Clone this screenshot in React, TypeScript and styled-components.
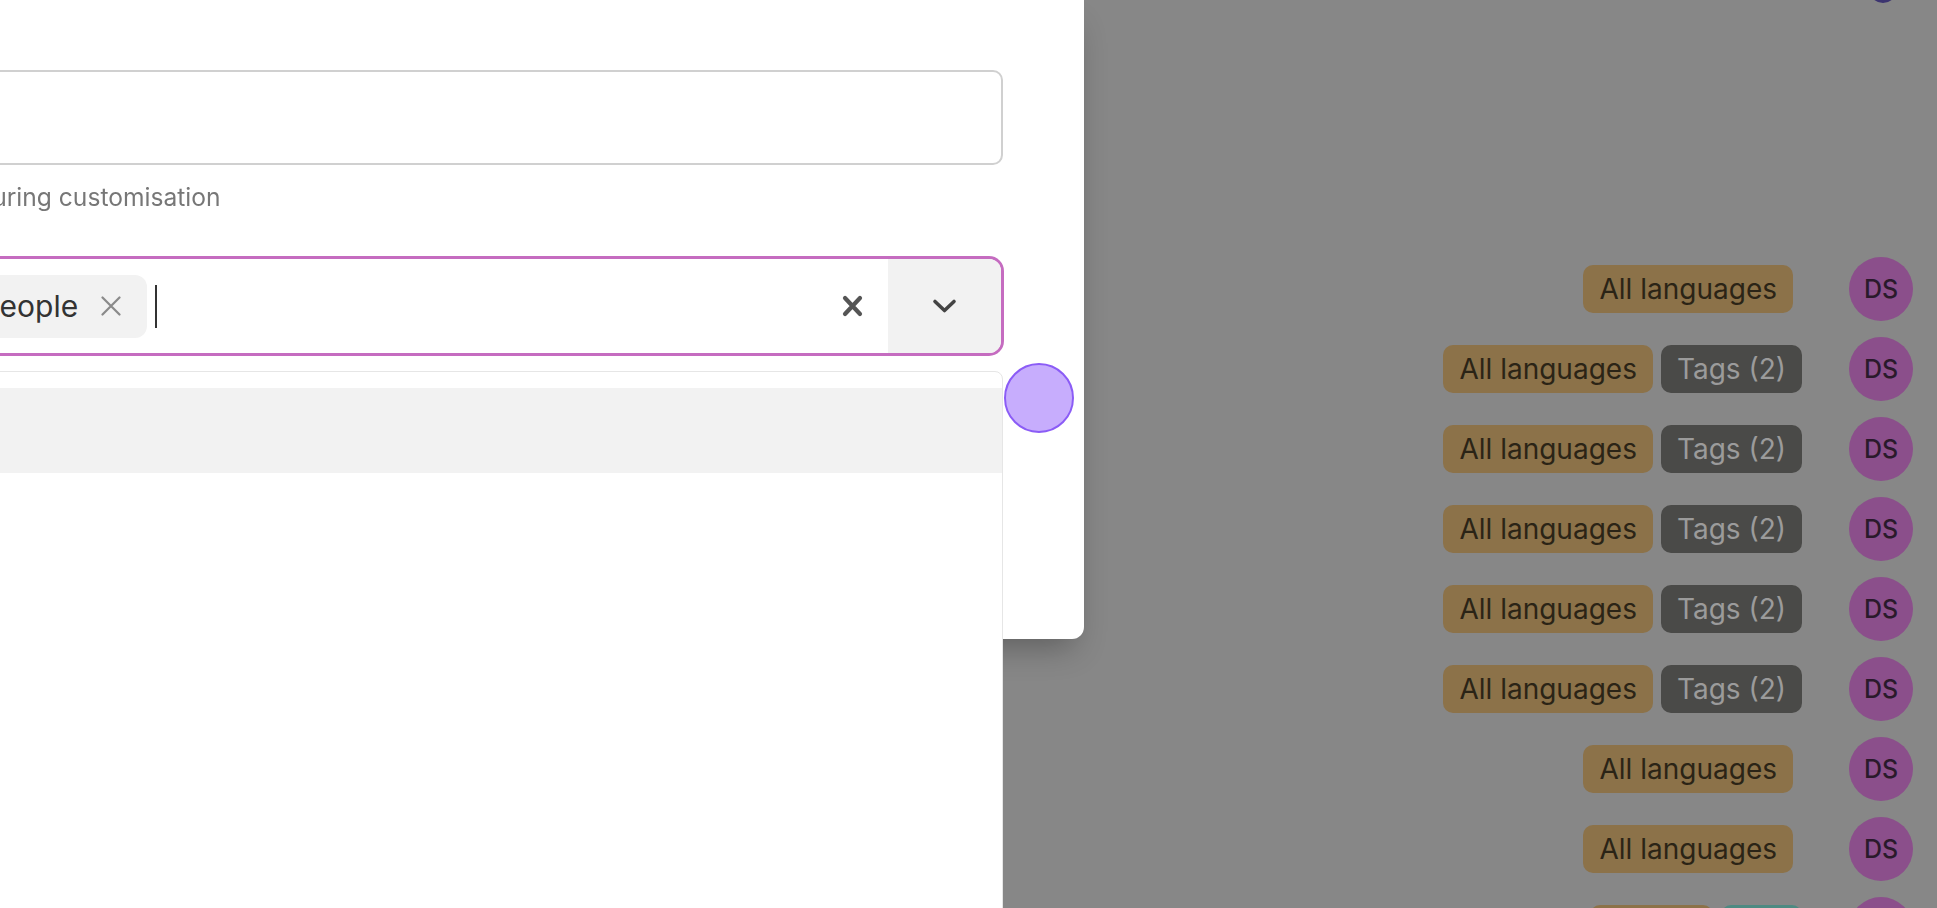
import React from 'react';
import styled, { createGlobalStyle } from 'styled-components';

type Tone = 'gold' | 'dark' | 'teal';

type RowData = {
  badges: { label: string; tone: Tone }[];
};

const rows: RowData[] = [
  { badges: [{ label: 'All languages', tone: 'gold' }] },
  { badges: [{ label: 'All languages', tone: 'gold' }, { label: 'Tags (2)', tone: 'dark' }] },
  { badges: [{ label: 'All languages', tone: 'gold' }, { label: 'Tags (2)', tone: 'dark' }] },
  { badges: [{ label: 'All languages', tone: 'gold' }, { label: 'Tags (2)', tone: 'dark' }] },
  { badges: [{ label: 'All languages', tone: 'gold' }, { label: 'Tags (2)', tone: 'dark' }] },
  { badges: [{ label: 'All languages', tone: 'gold' }, { label: 'Tags (2)', tone: 'dark' }] },
  { badges: [{ label: 'All languages', tone: 'gold' }] },
  { badges: [{ label: 'All languages', tone: 'gold' }] },
  { badges: [{ label: 'French', tone: 'gold' }, { label: 'Tag', tone: 'teal' }] },
];

const tones: Record<Tone, { bg: string; fg: string }> = {
  gold: { bg: '#8c7249', fg: '#2b2416' },
  dark: { bg: '#4a4a48', fg: '#9b9b9b' },
  teal: { bg: '#4e8a82', fg: '#1d3431' },
};

const ThinCross = () => (
  <svg width="20" height="20" viewBox="0 0 20 20" fill="none">
    <path d="M1.5 1.5L18.5 18.5M18.5 1.5L1.5 18.5" stroke="#8a8a8a" strokeWidth="2.2" strokeLinecap="round" />
  </svg>
);

const App = () => {
  return (
    <>
      <GlobalStyle />
      <Page>
        <Header>
          <TopAvatar />
        </Header>
        <List>
          {rows.map((row, i) => (
            <Row key={i}>
              <BadgeGroup $single={row.badges.length === 1}>
                {row.badges.map((b) => (
                  <Badge key={b.label} $tone={b.tone}>
                    {b.label}
                  </Badge>
                ))}
              </BadgeGroup>
              <Avatar>DS</Avatar>
            </Row>
          ))}
        </List>
      </Page>

      <Dialog>
        <Form>
          <TextInput readOnly />
          <Hint>Shown to people during customisation</Hint>

          <SelectWrap>
            <Control>
              <ValueContainer>
                <Chip>
                  Managers
                  <ChipRemove>
                    <ThinCross />
                  </ChipRemove>
                </Chip>
                <Chip>
                  People
                  <ChipRemove>
                    <ThinCross />
                  </ChipRemove>
                </Chip>
                <Caret />
              </ValueContainer>
              <ClearButton>
                <svg width="21" height="22" viewBox="0 0 21 22" fill="none">
                  <path d="M3 3L18 19M18 3L3 19" stroke="#555" strokeWidth="4.2" strokeLinecap="round" />
                </svg>
              </ClearButton>
              <DropdownButton>
                <svg width="25" height="16" viewBox="0 0 25 16" fill="none">
                  <path d="M3 3.5L12.5 12.5L22 3.5" stroke="#444" strokeWidth="3.6" strokeLinecap="round" strokeLinejoin="round" />
                </svg>
              </DropdownButton>
            </Control>

            <Menu>
              <Option $active>Everyone</Option>
              <Option>Managers</Option>
              <Option>Guests</Option>
              <Option>Partners</Option>
              <Option>Contractors</Option>
            </Menu>
          </SelectWrap>
        </Form>
        <ClickMarker />
      </Dialog>
    </>
  );
};

export default App;

const GlobalStyle = createGlobalStyle`
  * { box-sizing: border-box; }
  html, body {
    margin: 0;
    padding: 0;
    width: 100%;
    height: 100%;
    overflow: hidden;
  }
  body {
    font-family: Inter, "Noto Sans", sans-serif;
    background: #878787;
  }
`;

const Page = styled.div`
  width: 100vw;
  height: 100vh;
  background: #878787;
`;

const Header = styled.div`
  display: flex;
  justify-content: flex-end;
  align-items: flex-end;
  height: 3px;
  padding-right: 40px;
`;

const TopAvatar = styled.div`
  flex-shrink: 0;
  width: 28px;
  height: 28px;
  border-radius: 50%;
  background: #3c3470;
`;

const List = styled.div`
  display: flex;
  flex-direction: column;
  margin-top: 246px;
`;

const Row = styled.div`
  display: flex;
  align-items: center;
  justify-content: flex-end;
  height: 80px;
  padding-right: 24px;
`;

const BadgeGroup = styled.div<{ $single: boolean }>`
  display: flex;
  gap: 8px;
  margin-right: ${(p) => (p.$single ? 56 : 47)}px;
`;

const Badge = styled.div<{ $tone: Tone }>`
  display: flex;
  align-items: center;
  height: 48px;
  padding: 0 16px;
  border-radius: 10px;
  font-size: 28px;
  font-weight: 400;
  background: ${(p) => tones[p.$tone].bg};
  color: ${(p) => tones[p.$tone].fg};
`;

const Avatar = styled.div`
  display: flex;
  align-items: center;
  justify-content: center;
  width: 64px;
  height: 64px;
  border-radius: 50%;
  background: #8b4f8b;
  color: #2a1a2b;
  font-size: 25px;
  font-weight: 500;
`;

const Dialog = styled.div`
  position: fixed;
  top: 0;
  left: -400px;
  width: 1484px;
  height: 639px;
  background: #fff;
  border-bottom-right-radius: 12px;
  box-shadow: 0 18px 32px -10px rgba(0, 0, 0, 0.3);
`;

const Form = styled.div`
  display: flex;
  flex-direction: column;
  padding: 70px 81px 0 32px;
`;

const TextInput = styled.input`
  height: 95px;
  border: 2px solid #d0d0d0;
  border-radius: 10px;
  background: #fff;
  outline: none;
`;

const Hint = styled.div`
  margin-top: 17px;
  padding-left: 143px;
  font-size: 24.6px;
  line-height: 30px;
  color: #777;
`;

const SelectWrap = styled.div`
  position: relative;
  margin-top: 45px;
`;

const Control = styled.div`
  display: flex;
  height: 98px;
  border: 2px solid #c56cc0;
  box-shadow: 0 0 0 1px #c56cc0;
  border-radius: 14px;
  overflow: hidden;
  background: #fff;
`;

const ValueContainer = styled.div`
  flex: 1;
  display: flex;
  align-items: center;
  gap: 8px;
  padding-left: 104px;
`;

const Chip = styled.div`
  display: flex;
  align-items: center;
  height: 63px;
  padding: 0 26px 0 12px;
  border-radius: 12px;
  background: #f2f2f2;
  color: #333;
  font-size: 30px;
`;

const ChipRemove = styled.span`
  display: flex;
  margin-left: 23px;
`;

const Caret = styled.div`
  width: 2px;
  height: 43px;
  background: #333;
`;

const ClearButton = styled.div`
  display: flex;
  align-items: center;
  justify-content: center;
  width: 72px;
`;

const DropdownButton = styled.div`
  display: flex;
  align-items: center;
  justify-content: center;
  width: 113px;
  background: #f2f2f2;
`;

const Menu = styled.div`
  position: absolute;
  top: calc(100% + 16px);
  left: 0;
  right: 0;
  height: 620px;
  padding-top: 16px;
  background: #fff;
  border: 1px solid #e6e6e6;
  border-radius: 8px;
`;

const Option = styled.div<{ $active?: boolean }>`
  display: flex;
  align-items: center;
  height: 85px;
  padding-left: 20px;
  font-size: 22px;
  color: #333;
  background: ${(p) => (p.$active ? '#f2f2f2' : 'transparent')};
`;

const ClickMarker = styled.div`
  position: absolute;
  left: ${1004 + 400}px;
  top: 363px;
  width: 70px;
  height: 70px;
  border-radius: 50%;
  background: #c7adfd;
  border: 2px solid #8b5cf6;
`;
